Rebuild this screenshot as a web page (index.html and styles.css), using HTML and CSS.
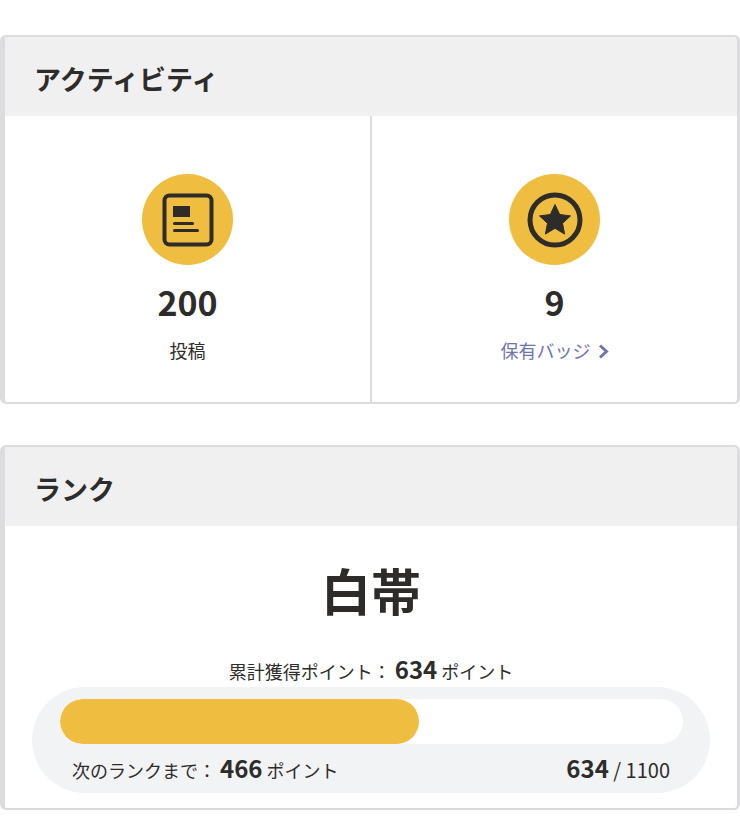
FILE: index.html
```html
<!DOCTYPE html>
<html lang="ja">
<head>
    <meta charset="UTF-8">
    <meta name="viewport" content="width=device-width, initial-scale=1.0">
    <title>マイページ</title>
    <link rel="stylesheet" href="styles.css">
</head>
<body>
    <!-- アクティビティ -->
    <section class="card">
        <h2 class="card-title">アクティビティ</h2>
        <div class="activity">
            <div class="activity-item">
                <div class="circle">
                    <svg width="52" height="54" viewBox="0 0 52 54">
                        <rect x="2.5" y="2.5" width="47" height="49" rx="5" fill="none" stroke="#2e2c2a" stroke-width="4"/>
                        <rect x="11" y="13" width="17" height="11" fill="#2e2c2a"/>
                        <rect x="11" y="29" width="21" height="3" rx="1.5" fill="#2e2c2a"/>
                        <rect x="11" y="36" width="26" height="3" rx="1.5" fill="#2e2c2a"/>
                    </svg>
                </div>
                <div class="count">200</div>
                <div class="label">投稿</div>
            </div>
            <div class="activity-item">
                <div class="circle">
                    <svg width="56" height="56" viewBox="0 0 56 56">
                        <circle cx="28" cy="28" r="25" fill="none" stroke="#2e2c2a" stroke-width="5"/>
                        <path d="M28 12.5l4.7 10 10.8 1.4-8 7.4 2.1 10.8L28 36.3l-9.6 5.8 2.1-10.8-8-7.4 10.8-1.4z" fill="#2e2c2a" stroke="#2e2c2a" stroke-width="1" stroke-linejoin="round"/>
                    </svg>
                </div>
                <div class="count">9</div>
                <a class="label link" href="#">保有バッジ
                    <svg class="chevron" width="11" height="15" viewBox="0 0 11 15">
                        <path d="M2 1.5l6.5 6-6.5 6" fill="none" stroke="#6f75ac" stroke-width="3"/>
                    </svg>
                </a>
            </div>
        </div>
    </section>

    <!-- ランク -->
    <section class="card">
        <h2 class="card-title">ランク</h2>
        <div class="rank">
            <div class="rank-name">白帯</div>
            <p class="total">累計獲得ポイント： <b>634</b> ポイント</p>
            <div class="progress">
                <div class="bar">
                    <div class="bar-fill"></div>
                </div>
                <div class="progress-text">
                    <span>次のランクまで： <b class="next">466</b> ポイント</span>
                    <span><b>634</b> / 1100</span>
                </div>
            </div>
        </div>
    </section>
</body>
</html>
```

FILE: styles.css
```css
*{
    margin: 0;
    padding: 0;
    box-sizing: border-box;
}

body{
    padding-top: 35px;
    background-color: #fff;
    color: #2e2c2a;
    font-family: "Noto Sans CJK JP", "Noto Sans", sans-serif;
}

.card{
    border: 2px solid #dcdcdf;
    border-left-width: 5px;
    border-right-width: 3px;
    border-radius: 6px;
    overflow: hidden;
    background-color: #fff;
}

.card + .card{
    margin-top: 41px;
}

.card-title{
    height: 79px;
    padding-left: 29px;
    background-color: #f0f0f1;
    font-size: 27px;
    font-weight: 700;
    line-height: 83px;
}

.activity{
    display: flex;
    height: 286px;
}

.activity-item{
    flex: 1;
    display: flex;
    flex-direction: column;
    align-items: center;
    padding-top: 58px;
}

.activity-item + .activity-item{
    border-left: 2px solid #dedee1;
}

.circle{
    width: 91px;
    height: 91px;
    border-radius: 50%;
    background-color: #efbd3f;
    display: flex;
    align-items: center;
    justify-content: center;
}

.count{
    margin-top: 10px;
    font-size: 34px;
    font-weight: 700;
    line-height: 54px;
}

.label{
    margin-top: 8px;
    font-size: 18px;
    line-height: 26px;
}

.link{
    color: #6f75ac;
    text-decoration: none;
}

.chevron{
    margin-left: 3px;
    vertical-align: -1px;
}

.rank{
    height: 282px;
    padding: 26px 26px 0;
    display: flex;
    flex-direction: column;
    align-items: center;
}

.rank-name{
    font-size: 50px;
    font-weight: 700;
    line-height: 74px;
}

.total{
    margin-top: 28px;
    font-size: 18px;
    line-height: 30px;
}

.total b,
.progress-text b{
    font-size: 24px;
    font-weight: 700;
}

.progress{
    width: 678px;
    height: 106px;
    margin-top: 1px;
    padding: 12px 27px 0 28px;
    border-radius: 53px;
    background-color: #f2f3f5;
}

.bar{
    height: 45px;
    border-radius: 23px;
    background-color: #fff;
    overflow: hidden;
}

.bar-fill{
    width: 57.6%;
    height: 100%;
    border-radius: 23px;
    background-color: #efbd3f;
}

.progress-text{
    display: flex;
    justify-content: space-between;
    padding: 6px 13px 0 12px;
    font-size: 18px;
    line-height: 36px;
}

.progress-text span:last-child{
    font-size: 20px;
}
```
